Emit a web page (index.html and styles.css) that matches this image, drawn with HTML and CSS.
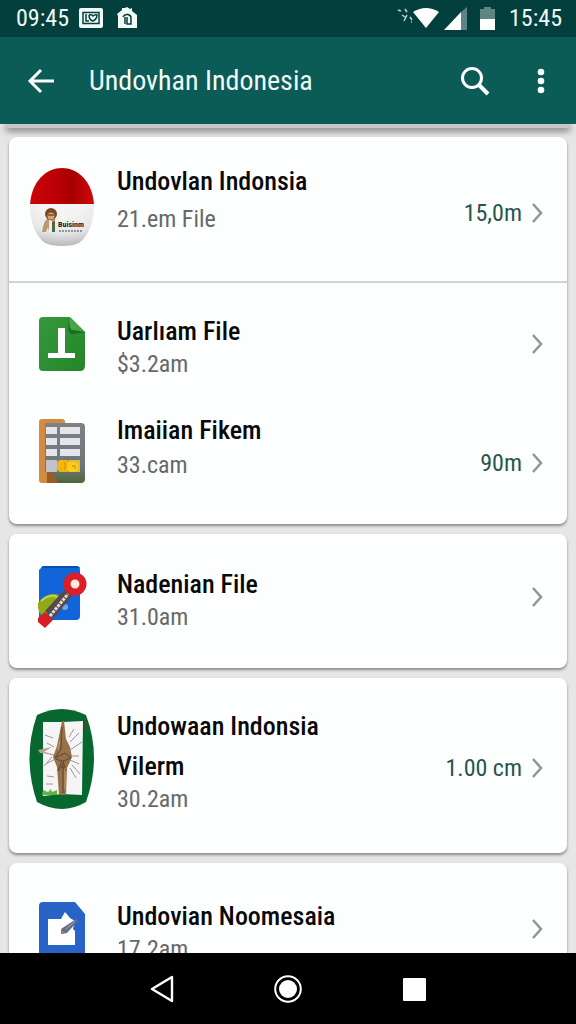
FILE: index.html
```html
<!DOCTYPE html>
<html lang="id">
<head>
<meta charset="utf-8">
<meta name="viewport" content="width=device-width, initial-scale=1">
<title>Undovhan Indonesia</title>
<link rel="stylesheet" href="styles.css">
</head>
<body>
<div class="screen">
  <div class="status">
    <span class="clock">09:45</span>
    <svg class="status-image" width="24" height="20" viewBox="0 0 24 20" aria-hidden="true"><rect width="24" height="20" rx="2" fill="#f2fbfa"/><path d="M4 4.500h16v11H4zM7 6v7h3M10 7q3-1 4 1 2-2 4-1 0 4-4 6-4-1-4-6" fill="none" stroke="#033f3d" stroke-width="1.5"/></svg>
    <svg class="status-home" width="20" height="22" viewBox="0 0 20 22" aria-hidden="true"><path d="M0 7 5 3V1h3l2-1 3 2 2-1v3l5 4v13H1V9z" fill="#f2fbfa"/><path d="M6 10c2-4 8-3 8 1v6h-4v-7M8 10v7" fill="none" stroke="#033f3d" stroke-width="1.5"/></svg>
    <span class="spacer"></span>
    <svg class="status-signal" width="98" height="26" viewBox="0 0 98 26" aria-hidden="true">
      <path d="m1 5 3 1M8 4l2 3M5 10l3 2M10 10l-3 6M13 12l2 3M14 17h1" stroke="#b9dad7" stroke-width="1.5"/>
      <path d="M16 7q13-8 26 0L29 23z" fill="#fff"/>
      <path d="M64 7 70 2v23h-6z" fill="#5d8584"/><path d="M47 25 64 7v18z" fill="#fff"/>
      <path d="M83 4h4V2h7v2h4v11H83z" fill="#5d8584"/><path d="M83 14h15v11H83z" fill="#fff"/>
    </svg>
    <span class="clock">15:45</span>
  </div>
  <header class="bar">
    <button class="icon-button" aria-label="Back"><svg width="28" height="26" viewBox="0 0 28 26"><path d="M27 13H4M14 2 3 13l11 11" fill="none" stroke="#fff" stroke-width="3"/></svg></button>
    <h1 class="heading">Undovhan Indonesia</h1>
    <button class="icon-button" aria-label="Search"><svg width="30" height="30" viewBox="0 0 30 30"><circle cx="12" cy="12" r="9.5" fill="none" stroke="#fff" stroke-width="3"/><path d="m19 19 9 9" stroke="#fff" stroke-width="4"/></svg></button>
    <button class="icon-button more" aria-label="More options"><svg width="8" height="26" viewBox="0 0 8 26" fill="#fff"><circle cx="4" cy="4" r="3.3"/><circle cx="4" cy="13" r="3.3"/><circle cx="4" cy="22" r="3.3"/></svg></button>
  </header>
  <main class="list">
    <div class="edge"></div>
    <section class="card">
      <a class="row row-first" href="#egg">
        <svg class="art" width="66" height="80" viewBox="0 0 66 80" aria-hidden="true">
          <defs>
            <linearGradient id="red"><stop offset="0" stop-color="#c9050b"/><stop offset=".45" stop-color="#b80005"/><stop offset=".65" stop-color="#a50003"/><stop offset="1" stop-color="#d0080b"/></linearGradient>
            <radialGradient id="shell" cx=".5" cy="0" r="1"><stop offset=".3" stop-color="#f4f4f5"/><stop offset=".7" stop-color="#e6e6e8"/><stop offset="1" stop-color="#b9b9bd"/></radialGradient>
          </defs>
          <path d="M1 37h64c0 20-6 32-15 39q-6 3-17 3t-17-3C7 69 1 57 1 37z" fill="url(#shell)"/>
          <path d="M1 37C3 13 18 1 33 1s30 12 32 36z" fill="url(#red)"/>
          <path d="M13 65q2-12 6-14l7 1v13h-6l-1-5-2 5z" fill="#b79a70"/><path d="m20 53 3 1v11h-3z" fill="#f2ebdf"/><path d="m23 55 3-1v11h-3z" fill="#4d6549"/>
          <circle cx="22" cy="47" r="6" fill="#7a4a1f"/><circle cx="22" cy="49" r="3.5" fill="#d9a477"/><path d="M19 48h6" stroke="#3c2517"/>
          <text x="29" y="60" class="egg-name">Buisinm</text>
          <path d="M30 64h24" stroke="#77777c" stroke-width="1.5" stroke-dasharray="2 1"/>
        </svg>
        <span class="text"><span class="title">Undovlan Indonsia</span><span class="sub">21.em File</span></span>
        <span class="end">15,0m<svg class="chevron" width="12" height="20" viewBox="0 0 12 20"><path d="m2 1 8 9-8 9"/></svg></span>
      </a>
      <a class="row row-upper" href="#green">
        <svg class="art" width="48" height="56" viewBox="0 0 48 56" aria-hidden="true">
          <defs><linearGradient id="leaf" x2="1" y2="1"><stop stop-color="#37993b"/><stop offset="1" stop-color="#23842b"/></linearGradient></defs>
          <path d="M5 1h27l15 15v33q0 6-5 6H5q-4 0-4-4V5q0-4 4-4z" fill="url(#leaf)"/>
          <path d="M31 1c-1 10-1 16 2 17s8-2 14-1z" fill="#187021"/><path d="M31 1l16 15q-9-2-13-2-3-1-3-13z" fill="#47a44a"/>
          <path d="M20 12h7v25h10v5H10v-5h10z" fill="#fff"/>
        </svg>
        <span class="text"><span class="title">Uarlıam File</span><span class="sub">$3.2am</span></span>
        <span class="end"><svg class="chevron" width="12" height="20" viewBox="0 0 12 20"><path d="m2 1 8 9-8 9"/></svg></span>
      </a>
      <a class="row row-lower" href="#table">
        <svg class="art" width="48" height="66" viewBox="0 0 48 66" aria-hidden="true">
          <defs><linearGradient id="slate" x2="0" y2="1"><stop offset="0" stop-color="#7d8287"/><stop offset=".75" stop-color="#6d7376"/><stop offset="1" stop-color="#4d6738"/></linearGradient></defs>
          <rect x="1" y="1" width="26" height="64" rx="3" fill="#d38b42"/><path d="M9 54h18v11H9z" fill="#9a5b24"/>
          <path d="M7 5h36q4 0 4 4v52q0 4-4 4H20l-6-11H7z" fill="url(#slate)"/>
          <path d="M8 9h11v7H8zM22 9h20v7H22zM8 20h11v7H8zM22 20h20v7H22zM8 31h11v7H8zM22 31h20v7H22z" fill="#e4e6ec"/>
          <path d="M8 42h11v12H8z" fill="#bec2cd"/><path d="M31 42h11v12H31z" fill="#e5ba35"/>
          <rect x="19" y="42" width="13" height="12" rx="4" fill="#f5b60c"/><rect x="29" y="44" width="11" height="10" rx="4" fill="#fccb20"/><path d="M26 44q3 4 0 8M34 48h3v3" fill="none" stroke="#e09a05" stroke-width="1.500"/>
        </svg>
        <span class="text"><span class="title">Imaiian Fikem</span><span class="sub">33.cam</span></span>
        <span class="end">90m<svg class="chevron" width="12" height="20" viewBox="0 0 12 20"><path d="m2 1 8 9-8 9"/></svg></span>
      </a>
    </section>
    <section class="card">
      <a class="row row-single" href="#tool">
        <svg class="art" width="50" height="64" viewBox="0 0 50 64" aria-hidden="true">
          <path d="M6 1h33q4 0 4 4v46q0 4-4 4H2V5z" fill="#1265d8"/><path d="M6 1h33q3 0 4 2H4z" fill="#0750b5"/>
          <path d="M1 38q7-9 16-9 6 0 8 5L7 52Q0 48 1 38z" fill="#91aa19"/><path d="M4 36q7-6 14-5l4 3" stroke="#c2d34b" stroke-width="2" fill="none"/><circle cx="28" cy="42" r="3" fill="#75a7df"/>
          <path d="m28 24 7 7L16 54l-8-8z" fill="#594a4a"/>
          <path d="m1 53 7-6 8 8-8 8-7-6z" fill="#d91b25"/>
          <path d="m13 51 18-22" stroke="#e2dcda" stroke-width="3" stroke-dasharray="3 1"/>
          <circle cx="38" cy="19" r="8" fill="#ffe9dc" stroke="#dd1d27" stroke-width="7"/>
        </svg>
        <span class="text"><span class="title">Nadenian File</span><span class="sub">31.0am</span></span>
        <span class="end"><svg class="chevron" width="12" height="20" viewBox="0 0 12 20"><path d="m2 1 8 9-8 9"/></svg></span>
      </a>
    </section>
    <section class="card">
      <a class="row row-tall" href="#tree">
        <svg class="art" width="66" height="102" viewBox="0 0 66 102" aria-hidden="true">
          <path d="M8 7Q33-5 57 7q16 42 0 87-24 14-49 0Q-7 50 8 7z" fill="#07682f"/>
          <path d="M14 14h20l20-1-1 74-20-1-19 2z" fill="#f6f5f6"/><path d="m54 8 2 9-2 14z" fill="#7e2427"/>
          <path d="m16 27 8 3M18 35l7 4M16 45l9 2M23 49l-8 9M17 56l9-5M18 68l7 1M45 21l-5 8M50 25l-9 9M53 34 41 42M50 48h-8M50 56l-9-4M51 66l-8-9M47 70l-6-10M17 76h7" fill="none" stroke="#9b969a"/>
          <path d="m9 42 14-3-8 5 9 2-13-1z" fill="#b8a186"/>
          <path d="M33 13h2l2 18 4 8 2 10-5 11-1 27h-7l-2-28-4-10 4-11z" fill="#96714a"/>
          <path d="m33 19-1 22-6 9 10-5 6 5-8 3 3 10-4-5-4 5 4-10-6-2M34 55v30" fill="none" stroke="#60442c"/><path d="m31 33-2 9M36 60v21" stroke="#c29c6b"/>
          <path d="m13 87 1-5 5 2 3-3 1 3 5-2v5z" fill="#65b33d"/>
        </svg>
        <span class="text"><span class="title">Undowaan Indonsia Vilerm</span><span class="sub">30.2am</span></span>
        <span class="end">1.00 cm<svg class="chevron" width="12" height="20" viewBox="0 0 12 20"><path d="m2 1 8 9-8 9"/></svg></span>
      </a>
    </section>
    <section class="card">
      <a class="row row-last" href="#edit">
        <svg class="art" width="48" height="56" viewBox="0 0 48 56" aria-hidden="true">
          <path d="M5 1h32l10 12v38q0 4-4 4H5q-4 0-4-4V5q0-4 4-4z" fill="#2863c8"/>
          <path d="M10 18h13l4-7 5 6 5 3-2 8 2 2v14H10z" fill="#fff"/>
          <path d="m23 28 15-10 2 2-11 12-6 1z" fill="#626f91"/><path d="m23 28 4 4-4 1z" fill="#c56c58"/><path d="m28 28 9-8" stroke="#b49ca0"/>
        </svg>
        <span class="text"><span class="title">Undovian Noomesaia</span><span class="sub">17.2am</span></span>
        <span class="end"><svg class="chevron" width="12" height="20" viewBox="0 0 12 20"><path d="m2 1 8 9-8 9"/></svg></span>
      </a>
    </section>
  </main>
  <nav class="nav" aria-label="System">
    <button class="nav-button" aria-label="Back"><svg width="26" height="30" viewBox="0 0 26 30"><path d="M23 3v24L3 15z" fill="none" stroke="#fff" stroke-width="2.4" stroke-linejoin="round"/></svg></button>
    <button class="nav-button" aria-label="Home"><svg width="30" height="30" viewBox="0 0 30 30"><circle cx="15" cy="15" r="12.8" fill="none" stroke="#fff" stroke-width="2"/><circle cx="15" cy="15" r="9" fill="#fff"/></svg></button>
    <button class="nav-button" aria-label="Recent apps"><svg width="24" height="24" viewBox="0 0 24 24"><rect x="1" y="1" width="23" height="23" rx="1" fill="#fff"/></svg></button>
  </nav>
</div>
</body>
</html>
```
FILE: styles.css
```css
* { box-sizing: border-box; }
body { margin: 0; font-family: "Roboto Condensed", Roboto, sans-serif; background: #e6e6e7; }
svg { display: block; flex: none; }
button { padding: 0; border: 0; background: none; }
.screen { display: flex; flex-direction: column; height: 100vh; overflow: hidden; }
.status { display: flex; align-items: center; flex: none; height: 37px; padding: 0 14px 2px 16px; background: #033f3d; color: #edf8f7; }
.clock { font-size: 24px; line-height: 32px; }
.status-image { margin-left: 10px; }
.status-home { margin-left: 14px; }
.spacer { flex: 1; }
.status-signal { margin-right: 14px; }
.bar { display: flex; align-items: center; flex: none; height: 87px; padding: 0 12px 0 18px; background: #0b5b57; }
.icon-button { display: grid; place-items: center; width: 46px; height: 48px; }
.more { margin-left: 20px; }
.heading { flex: 1; margin: 0 0 0 25px; color: #f0f9f8; font-size: 28px; line-height: 40px; font-weight: 400; }
.list { display: flex; flex: 1; flex-direction: column; gap: 10px; min-height: 0; padding: 0 9px; overflow: hidden; }
.edge { flex: none; height: 4px; margin: 0 -2px -1px; background: #c6c8c8; box-shadow: 0 2px 7px 1px rgba(0, 0, 0, .5); }
.card { flex: none; border-radius: 8px; background: #fdfefe; box-shadow: 0 2px 3px rgba(0, 0, 0, .4); }
.row { display: grid; grid-template-columns: 66px 1fr auto; align-items: center; column-gap: 22px; padding: 0 24px 0 20px; color: #090909; text-decoration: none; }
.art { justify-self: center; }
.text { display: flex; flex-direction: column; max-width: 220px; }
.title { font-size: 26px; line-height: 40px; font-weight: 500; }
.sub { color: #66696b; font-size: 24px; line-height: 26px; }
.end { display: flex; align-items: center; gap: 9px; color: #28564f; font-size: 24px; line-height: 32px; }
.chevron path { fill: none; stroke: #929495; stroke-width: 2.5; }
.row-first { padding-top: 24px; padding-bottom: 34px; border-bottom: 2px solid #d2d4d4; }
.row-first .text { align-self: start; gap: 5px; }
.row-first .art { margin-top: 6px; }
.row-first .end { padding-top: 18px; }
.row-upper { padding-top: 28px; padding-bottom: 33px; }
.row-lower { padding-bottom: 40px; }
.row-lower .text { align-self: start; gap: 2px; }
.row-lower .art { margin-top: 8px; }
.row-lower .end { padding-top: 32px; }
.row-single { padding-top: 30px; padding-bottom: 38px; }
.row-tall { padding-top: 28px; padding-bottom: 41px; }
.row-tall .end { padding-top: 18px; }
.row-last { padding-top: 33px; padding-bottom: 38px; }
.egg-name { font-size: 8px; font-weight: 700; fill: #1b1b1f; }
.nav { display: flex; justify-content: center; align-items: center; gap: 78px; flex: none; height: 71px; background: #000; }
.nav-button { display: grid; place-items: center; width: 48px; height: 48px; }
```
